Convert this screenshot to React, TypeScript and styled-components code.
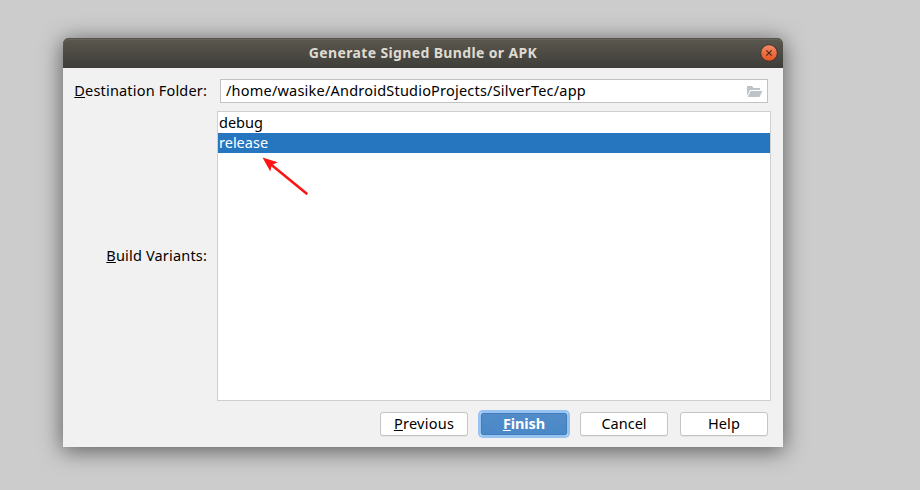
import React from "react";
import styled, { createGlobalStyle, css } from "styled-components";

const GlobalStyle = createGlobalStyle`
  * { box-sizing: border-box; }
  body {
    margin: 0;
    background: #cccccc;
    overflow: hidden;
    font-family: "Noto Sans", "Open Sans", sans-serif;
    font-size: 14.5px;
    color: #000;
  }
`;

const Desktop = styled.main`
  width: 920px;
  height: 490px;
  padding: 38px 0 0 63px;
  background: #cccccc;
`;

const Dialog = styled.section`
  width: 720px;
  height: 409px;
  display: flex;
  flex-direction: column;
  background: #f1f1f1;
  border-radius: 6px 6px 0 0;
  box-shadow: 0 3px 22px 1px rgba(0, 0, 0, 0.54);
`;

const TitleBar = styled.header`
  height: 30px;
  flex: none;
  display: grid;
  grid-template-columns: 28px 1fr 28px;
  align-items: center;
  justify-items: center;
  border-radius: 6px 6px 0 0;
  background: linear-gradient(#5b584f, #3e3d39);
  box-shadow: inset 0 1px 0 #55534a, inset 0 2px 0 #66635a;
`;

const Title = styled.h1`
  grid-column: 2;
  margin: 0;
  font-size: 14px;
  line-height: 30px;
  font-weight: 700;
  color: #dfdbd2;
  white-space: nowrap;
  letter-spacing: 0.36px;
`;

const CloseButton = styled.button`
  width: 18px;
  height: 18px;
  padding: 0;
  border: 0;
  background: none;
  svg { display: block; }
`;

const Form = styled.div`
  flex: 1;
  display: grid;
  grid-template-columns: 144px 554px;
  grid-template-rows: 24px 290px;
  column-gap: 10px;
  row-gap: 8px;
  padding-top: 11px;
`;

const Label = styled.label`
  align-self: center;
  justify-self: end;
  padding-bottom: 2px;
  line-height: 20px;
  white-space: nowrap;
  letter-spacing: 0.18px;
`;

const Mnemonic = styled.span`
  text-decoration: underline;
  text-decoration-thickness: 1px;
  text-underline-offset: 1px;
  text-decoration-skip-ink: none;
`;

const PathField = styled.div`
  width: 548px;
  margin-left: 3px;
  display: flex;
  align-items: center;
  justify-content: space-between;
  padding: 0 4px 0 5px;
  border: 1px solid #c2c2c2;
  background: #fff;
`;

const PathText = styled.span`
  padding-bottom: 2px;
  line-height: 20px;
  white-space: nowrap;
  letter-spacing: 0.21px;
`;

const FolderIcon = styled.svg`
  flex: none;
  margin-top: 2px;
  fill: #bdc3c7;
`;

const VariantList = styled.ul`
  list-style: none;
  margin: 0;
  padding: 1px 0;
  border: 1px solid #cfcfcf;
  background: #fff;
`;

const Variant = styled.li<{ $selected?: boolean }>`
  height: 20px;
  line-height: 18px;
  padding-left: 1px;
  ${(p) => p.$selected && css`
    background: #2675bf;
    color: #fff;
  `}
`;

const Actions = styled.footer`
  height: 46px;
  flex: none;
  display: flex;
  justify-content: flex-end;
  align-items: flex-start;
  gap: 12px;
  padding: 11px 15px 0 0;
`;

const ActionButton = styled.button<{ $primary?: boolean; $tracking?: number }>`
  width: 88px;
  height: 24px;
  padding: 0 0 2px;
  border: 1px solid #c4c4c4;
  border-radius: 3px;
  background: #fff;
  box-shadow: 0 1px 0 #e4e4e4;
  font: inherit;
  line-height: 20px;
  color: #000;
  letter-spacing: ${(p) => p.$tracking ?? 0}px;
  ${(p) => p.$primary && css`
    border-color: #97c3f3;
    background: linear-gradient(#528cc9, #4a88c7) padding-box;
    box-shadow: inset 0 0 0 1px #437ebb, 0 0 0 2px #97c3f3;
    color: #fff;
    font-weight: 700;
  `}
`;

const Arrow = styled.svg`
  position: absolute;
  left: 260px;
  top: 155px;
  pointer-events: none;
`;

export default function App() {
  return (
    <>
      <GlobalStyle />
      <Desktop>
        <Dialog>
          <TitleBar>
            <Title>Generate Signed Bundle or APK</Title>
            <CloseButton aria-label="Close">
              <svg width="18" height="18" viewBox="0 0 18 18">
                <defs>
                  <linearGradient id="close" x1="0" y1="0" x2="0" y2="1">
                    <stop offset="0" stopColor="#f58a68" />
                    <stop offset="1" stopColor="#e5531f" />
                  </linearGradient>
                </defs>
                <circle cx="9" cy="9" r="8.3" fill="url(#close)" stroke="#37352f" strokeWidth="0.9" />
                <path d="M6.3 6.3l5.4 5.4M11.7 6.3l-5.4 5.4" stroke="#40291d" strokeWidth="1.1" />
              </svg>
            </CloseButton>
          </TitleBar>
          <Form>
            <Label><Mnemonic>D</Mnemonic>estination Folder:</Label>
            <PathField>
              <PathText>/home/wasike/AndroidStudioProjects/SilverTec/app</PathText>
              <FolderIcon width="16" height="12" viewBox="0 0 16 12">
                <path d="M0 0h5l1.5 2H13v2H3L0 10z" />
                <path d="M3.7 5H15.5L12.5 11H.6z" />
              </FolderIcon>
            </PathField>
            <Label><Mnemonic>B</Mnemonic>uild Variants:</Label>
            <VariantList>
              <Variant>debug</Variant>
              <Variant $selected>release</Variant>
            </VariantList>
          </Form>
          <Actions>
            <ActionButton $tracking={0.25}><Mnemonic>P</Mnemonic>revious</ActionButton>
            <ActionButton $primary $tracking={-0.1}><Mnemonic>F</Mnemonic>inish</ActionButton>
            <ActionButton>Cancel</ActionButton>
            <ActionButton $tracking={0.1}>Help</ActionButton>
          </Actions>
        </Dialog>
      </Desktop>
      <Arrow width="50" height="42" viewBox="0 0 50 42">
        <path d="M46.5 38.5L11 9.5" stroke="#fb1616" strokeWidth="2.6" strokeLinecap="round" />
        <path d="M2.5 2.5L17.8 7.2L11.8 10L10.3 16.6Z" fill="#fb1616" />
      </Arrow>
    </>
  );
}
